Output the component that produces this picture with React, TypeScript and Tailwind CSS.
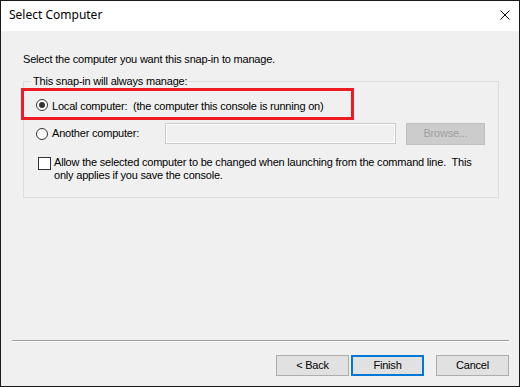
const sans = "font-['Liberation_Sans',Arial,sans-serif]";

const Radio = ({ checked }: { checked?: boolean }) => (
  <span className="flex h-[12px] w-[12px] shrink-0 items-center justify-center rounded-full border border-[#333333] bg-white">
    {checked && <span className="h-[6px] w-[6px] rounded-full bg-[#333333]" />}
  </span>
);

const Button = ({ label, primary }: { label: string; primary?: boolean }) => (
  <button
    className={
      primary
        ? "flex h-[21px] w-[73px] items-center justify-center border-2 border-[#0078d7] bg-[#e1e1e1] text-[11px] leading-[13px] text-black"
        : "flex h-[21px] w-[73px] items-center justify-center border border-[#adadad] bg-[#e1e1e1] text-[11px] leading-[13px] text-black"
    }
  >
    {label}
  </button>
);

export default function App() {
  return (
    <div className={`flex h-[387px] w-[520px] flex-col border border-[#1a1a1a] bg-[#f0f0f0] ${sans}`}>
      {/* title bar */}
      <div className="flex h-[30px] items-start justify-between bg-white pl-[8px] pr-[9px]">
        <span className="pt-[6px] font-['Noto_Sans',sans-serif] text-[12px] leading-[16px] text-black">
          Select Computer
        </span>
        <svg className="mt-[9px]" width="10" height="10" viewBox="0 0 10 10">
          <path d="M0.5 0.5 L9.5 9.5 M9.5 0.5 L0.5 9.5" stroke="#000" strokeWidth="1" />
        </svg>
      </div>

      {/* body */}
      <div className="flex flex-1 flex-col pb-[10px] text-[11px] leading-[13px] tracking-[-0.2px] text-black">
        <p className="pl-[22px] pt-[22px]">Select the computer you want this snap-in to manage.</p>

        <div className="relative ml-[22px] mt-[15px] h-[117px] w-[476px] border border-[#dcdcdc]">
          <span className="absolute left-[7px] top-[-7px] bg-[#f0f0f0] px-[2px]">
            This snap-in will always manage:
          </span>

          <div className="absolute left-[-3px] top-[6px] h-[32px] w-[333px] border-[3px] border-[#ed1c24]" />

          <div className="flex pl-[12px] pt-[17px]">
            <Radio checked />
            <span className="ml-[4px] mt-[1px]">
              Local computer:&nbsp; (the computer this console is running on)
            </span>
          </div>

          <div className="mt-[10px] flex h-[21px] items-center pl-[12px]">
            <Radio />
            <span className="ml-[4px] w-[113px]">Another computer:</span>
            <div className="h-[21px] w-[231px] border border-[#cccccc] bg-[#f0f0f0] shadow-[inset_0_0_0_1px_#ffffff]" />
            <div className="ml-[10px] flex h-[22px] w-[79px] items-center justify-center border border-[#bfbfbf] bg-[#cccccc] text-[#a0a0a0]">
              Browse...
            </div>
          </div>

          <div className="mt-[12px] flex items-start pl-[14px]">
            <span className="mt-[1px] h-[13px] w-[13px] shrink-0 border border-[#333333] bg-white" />
            <span className="ml-[3px]">
              Allow the selected computer to be changed when launching from the command line.&nbsp; This
              <br />
              only applies if you save the console.
            </span>
          </div>
        </div>

        <div className="mt-auto ml-[11px] mr-[10px] h-[2px] border-t border-b border-t-[#a0a0a0] border-b-white" />

        <div className="mt-[13px] flex justify-end pr-[10px]">
          <Button label="< Back" />
          <span className="ml-[2px]">
            <Button label="Finish" primary />
          </span>
          <span className="ml-[12px]">
            <Button label="Cancel" />
          </span>
        </div>
      </div>
    </div>
  );
}
